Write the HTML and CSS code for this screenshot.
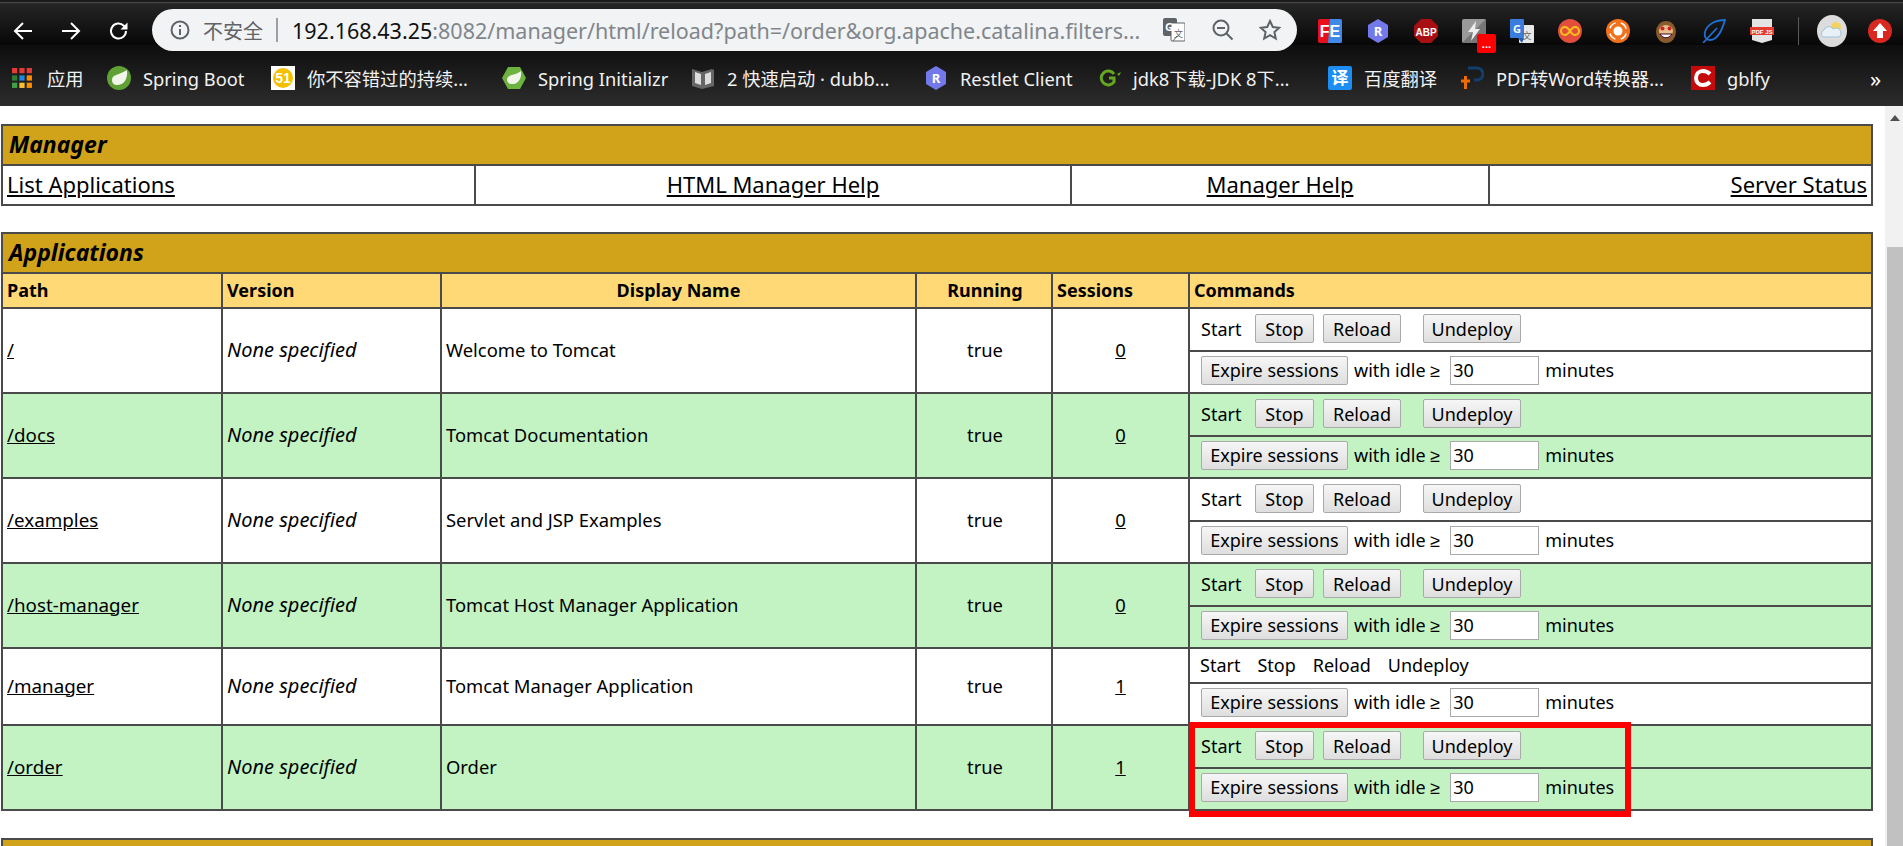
FILE: index.html
```html
<!DOCTYPE html>
<html lang="zh">
<head>
<meta charset="utf-8">
<title>/manager</title>
<link rel="stylesheet" href="styles.css">
</head>
<body>
<header class="chrome">
  <div class="toolbar">
    <nav class="nav">
      <svg class="nav-icon" viewBox="0 0 20 20"><path d="M19 10H2M10 2l-8 8 8 8"/></svg>
      <svg class="nav-icon" viewBox="0 0 20 20"><path d="M1 10h17M10 2l8 8-8 8"/></svg>
      <svg class="nav-icon" viewBox="0 0 20 20"><path d="M17 10a7.5 7.5 0 1 1-2.2-5.3L17 7"/><path class="fill" d="M18.500 1.500v7h-7z"/></svg>
    </nav>
    <div class="omnibox">
      <svg class="info" viewBox="0 0 20 20"><circle cx="10" cy="10" r="8.500"/><path d="M10 9v6M10 5v2"/></svg>
      <span class="insecure">不安全</span>
      <span class="divider"></span>
      <span class="url"><b>192.168.43.25</b>:8082/manager/html/reload?path=/order&amp;org.apache.catalina.filters...</span>
      <svg class="omni-icon translate" viewBox="0 0 22 24"><rect x="0" y="0" width="14" height="18" rx="2" fill="#5f6368"/><rect x="8" y="5" width="14" height="18" rx="1" fill="#fff" stroke="#5f6368"/><path d="M10 23l4-5" stroke="#5f6368"/><text x="2" y="13" class="svg-g">G</text><text x="11" y="19" class="svg-w">文</text></svg>
      <svg class="omni-icon line zoom" viewBox="0 0 22 22"><circle cx="9" cy="9" r="7.500"/><path d="M5 9h8M14.500 14.500l6 6"/></svg>
      <svg class="omni-icon line star" viewBox="0 0 22 22"><path d="M11 2l2.800 6 6.400.7-4.800 4.400 1.400 6.400L11 16.200 5.200 19.500l1.400-6.400L1.800 8.700 8.200 8z"/></svg>
    </div>
    <div class="extensions">
      <svg class="ext" viewBox="0 0 24 24"><rect width="24" height="24" rx="2" fill="#e8101c"/><path d="M12 0h10a2 2 0 0 1 2 2v20a2 2 0 0 1-2 2H10z" fill="#3f8ae8"/><text x="12" y="18" class="svg-fe">FE</text></svg>
      <svg class="ext" viewBox="0 0 24 24"><path d="M12 0l10 6v12l-10 6-10-6V6z" fill="#7379ea"/><text x="12" y="17" class="svg-r">R</text></svg>
      <svg class="ext" viewBox="0 0 24 24"><path d="M7 0h10l7 7v10l-7 7H7l-7-7V7z" fill="#a80f12"/><text x="12" y="16.500" class="svg-abp">ABP</text></svg>
      <span class="ext-slot">
        <svg class="ext" viewBox="0 0 24 24"><rect width="24" height="24" rx="2" fill="#9a9a9a"/><path d="M0 24L24 0v22a2 2 0 0 1-2 2z" fill="#777"/><path d="M14 2L6 13h5l-2 9 9-12h-5z" fill="#eee"/></svg>
        <span class="badge">...</span>
      </span>
      <svg class="ext" viewBox="0 0 24 24"><rect x="9" y="6" width="15" height="18" rx="1" fill="#e8e8e8"/><rect y="0" width="14" height="19" rx="1" fill="#3b7ddd"/><path d="M8 19l4 5 2-5z" fill="#2a5fb0"/><text x="7" y="14" class="svg-g2">G</text><text x="17" y="20" class="svg-w2">文</text></svg>
      <svg class="ext" viewBox="0 0 24 24"><circle cx="12" cy="12" r="12" fill="#e24d3c"/><path d="M12 12c-2-3-3.500-4-5-4a4 4 0 0 0 0 8c1.500 0 3-1 5-4s3.500-4 5-4a4 4 0 0 1 0 8c-1.500 0-3-1-5-4z" fill="none" stroke="#f7c21a" stroke-width="2"/></svg>
      <svg class="ext" viewBox="0 0 24 24"><circle cx="12" cy="12" r="12" fill="#f2711c"/><circle cx="12" cy="12" r="8.500" fill="none" stroke="#fff" stroke-width="1.500" stroke-dasharray="8 5.400" stroke-dashoffset="-2.500"/><circle cx="12" cy="12" r="4.500" fill="#fff"/></svg>
      <svg class="ext" viewBox="0 0 24 24"><ellipse cx="12" cy="13" rx="10" ry="11" fill="#8a5a2b"/><ellipse cx="12" cy="12" rx="7" ry="6" fill="#e8bd8b"/><circle cx="8.500" cy="9.500" r="2" fill="#c22"/><circle cx="15.500" cy="9.500" r="2" fill="#c22"/><path d="M6 15c3 5 9 5 12 0z" fill="#fff" stroke="#402"/></svg>
      <svg class="ext" viewBox="0 0 24 24"><path d="M23 1C14 1 5 5 3 13c-1 5 1 8 5 8 8 0 12-10 15-20zM1 24l14-15" fill="none" stroke="#1f6fd1" stroke-width="1.800"/></svg>
      <svg class="ext" viewBox="0 0 24 24"><path d="M2 0h20v21l-10 3-10-3z" fill="#e4e4e4"/><rect y="8" width="24" height="8" fill="#e63b2e"/><text x="12" y="14.500" class="svg-pdf">PDF JS</text></svg>
      <span class="ext-sep"></span>
      <svg class="weather" viewBox="0 0 30 32"><ellipse cx="15" cy="16" rx="15" ry="16" fill="#dcdcdc"/><circle cx="19" cy="12" r="5" fill="#f4d35e"/><path d="M6 22a4 4 0 0 1 1-7 5 5 0 0 1 9-1 5 5 0 0 1 6 8z" fill="#e8f1f8" stroke="#9fc3dd"/></svg>
      <svg class="ext last" viewBox="0 0 24 24"><circle cx="12" cy="12" r="12" fill="#d8281f"/><path d="M12 4l7 8h-4v7H9v-7H5z" fill="#fff"/></svg>
    </div>
  </div>
  <div class="bookmarks">
    <a class="bm"><svg class="bm-icon apps-icon" viewBox="0 0 20 20"><g fill="#e53935"><rect width="5" height="5"/><rect x="7" width="5" height="5"/><rect x="14" width="5" height="5" /></g><g><rect y="7" width="5" height="5" fill="#2e7d32"/><rect x="7" y="7" width="5" height="5" fill="#1e88e5"/><rect x="14" y="7" width="5" height="5" fill="#fb8c00"/><rect y="14" width="5" height="5" fill="#43a047"/><rect x="7" y="14" width="5" height="5" fill="#fbc02d"/><rect x="14" y="14" width="5" height="5" fill="#fb8c00"/></g></svg><span>应用</span></a>
    <a class="bm"><svg class="bm-icon" viewBox="0 0 24 24"><circle cx="12" cy="12" r="12" fill="#5fa134"/><path d="M20 4c1 9-3 15-10 15-3 0-5-2-5-5 0-6 8-5 15-10z" fill="#f1f5ea"/></svg><span>Spring Boot</span></a>
    <a class="bm"><svg class="bm-icon" viewBox="0 0 24 24"><rect width="24" height="24" fill="#fff"/><circle cx="12" cy="12" r="10" fill="#f6c000"/><text x="12" y="17" class="svg-51">51</text></svg><span>你不容错过的持续...</span></a>
    <a class="bm"><svg class="bm-icon" viewBox="0 0 24 24"><path d="M6 1h12l6 11-6 11H6L0 12z" fill="#6db33f"/><path d="M19 5c1 8-3 13-9 13-3 0-5-2-5-4 0-6 8-4 14-9z" fill="#f1f5ea"/></svg><span>Spring Initializr</span></a>
    <a class="bm"><svg class="bm-icon" viewBox="0 0 24 24"><path d="M1 3l10 3 10-3 2 1v16l-12 3L1 20z" fill="#666"/><path d="M4 6l6 2v11l-6-2zM14 8l6-2v11l-6 2z" fill="#ddd"/></svg><span>2 快速启动 · dubb...</span></a>
    <a class="bm"><svg class="bm-icon" viewBox="0 0 24 24"><path d="M12 0l10 6v12l-10 6-10-6V6z" fill="#7379ea"/><text x="12" y="17" class="svg-r">R</text></svg><span>Restlet Client</span></a>
    <a class="bm"><svg class="bm-icon" viewBox="0 0 24 24"><path d="M17 8a7 7 0 1 0 0 8v-4h-5" fill="none" stroke="#63a81e" stroke-width="3"/><path d="M20 8l4-2-2 4z" fill="#63a81e"/></svg><span>jdk8下载-JDK 8下...</span></a>
    <a class="bm"><svg class="bm-icon" viewBox="0 0 24 24"><rect width="24" height="24" rx="2" fill="#1c8df2"/><text x="12" y="18" class="svg-yi">译</text></svg><span>百度翻译</span></a>
    <a class="bm"><svg class="bm-icon" viewBox="0 0 24 24"><path d="M10 15H1M5.500 10v13" stroke="#ef6c00" stroke-width="3" fill="none"/><path d="M8 2h9a6 6 0 0 1 0 12h-3" stroke="#123f6d" stroke-width="3" fill="none"/></svg><span>PDF转Word转换器...</span></a>
    <a class="bm"><svg class="bm-icon" viewBox="0 0 24 24"><rect width="24" height="24" fill="#c40a0a"/><path d="M19 8c-2-2-4-3-7-3-4 0-7 3-7 7s3 7 7 7c3 0 5-1 7-3" fill="none" stroke="#fff" stroke-width="4"/></svg><span>gblfy</span></a>
    <span class="more">»</span>
  </div>
</header>

<div class="viewport">
  <main class="page">
    <table class="panel manager">
      <colgroup><col class="m1"><col class="m2"><col class="m3"><col class="m4"></colgroup>
      <tr class="title-row"><td colspan="4">Manager</td></tr>
      <tr class="links-row">
        <td><a>List Applications</a></td>
        <td class="center"><a>HTML Manager Help</a></td>
        <td class="center"><a>Manager Help</a></td>
        <td class="right"><a>Server Status</a></td>
      </tr>
    </table>

    <table class="panel apps">
      <colgroup><col class="a1"><col class="a2"><col class="a3"><col class="a4"><col class="a5"><col class="a6"></colgroup>
      <tr class="title-row"><td colspan="6">Applications</td></tr>
      <tr class="head-row">
        <th>Path</th><th>Version</th><th class="center">Display Name</th><th class="center">Running</th><th>Sessions</th><th>Commands</th>
      </tr>
      <tr class="app">
        <td class="path"><a>/</a></td><td class="ver">None specified</td><td>Welcome to Tomcat</td><td class="center">true</td><td class="center"><a>0</a></td>
        <td class="cmds"><div class="cmd-row"><span class="start">Start</span><button class="stop">Stop</button><button class="reload">Reload</button><button class="undeploy">Undeploy</button></div>
        <div class="cmd-row idle"><button>Expire sessions</button><span>with idle ≥</span><input value="30"><span>minutes</span></div></td>
      </tr>
      <tr class="app alt">
        <td class="path"><a>/docs</a></td><td class="ver">None specified</td><td>Tomcat Documentation</td><td class="center">true</td><td class="center"><a>0</a></td>
        <td class="cmds"><div class="cmd-row"><span class="start">Start</span><button class="stop">Stop</button><button class="reload">Reload</button><button class="undeploy">Undeploy</button></div>
        <div class="cmd-row idle"><button>Expire sessions</button><span>with idle ≥</span><input value="30"><span>minutes</span></div></td>
      </tr>
      <tr class="app">
        <td class="path"><a>/examples</a></td><td class="ver">None specified</td><td>Servlet and JSP Examples</td><td class="center">true</td><td class="center"><a>0</a></td>
        <td class="cmds"><div class="cmd-row"><span class="start">Start</span><button class="stop">Stop</button><button class="reload">Reload</button><button class="undeploy">Undeploy</button></div>
        <div class="cmd-row idle"><button>Expire sessions</button><span>with idle ≥</span><input value="30"><span>minutes</span></div></td>
      </tr>
      <tr class="app alt">
        <td class="path"><a>/host-manager</a></td><td class="ver">None specified</td><td>Tomcat Host Manager Application</td><td class="center">true</td><td class="center"><a>0</a></td>
        <td class="cmds"><div class="cmd-row"><span class="start">Start</span><button class="stop">Stop</button><button class="reload">Reload</button><button class="undeploy">Undeploy</button></div>
        <div class="cmd-row idle"><button>Expire sessions</button><span>with idle ≥</span><input value="30"><span>minutes</span></div></td>
      </tr>
      <tr class="app self">
        <td class="path"><a>/manager</a></td><td class="ver">None specified</td><td>Tomcat Manager Application</td><td class="center">true</td><td class="center"><a>1</a></td>
        <td class="cmds"><div class="cmd-row plain"><span>Start</span><span>Stop</span><span>Reload</span><span>Undeploy</span></div>
        <div class="cmd-row idle"><button>Expire sessions</button><span>with idle ≥</span><input value="30"><span>minutes</span></div></td>
      </tr>
      <tr class="app alt">
        <td class="path"><a>/order</a></td><td class="ver">None specified</td><td>Order</td><td class="center">true</td><td class="center"><a>1</a></td>
        <td class="cmds highlighted"><div class="cmd-row"><span class="start">Start</span><button class="stop">Stop</button><button class="reload">Reload</button><button class="undeploy">Undeploy</button></div>
        <div class="cmd-row idle"><button>Expire sessions</button><span>with idle ≥</span><input value="30"><span>minutes</span></div><span class="red-box"></span></td>
      </tr>
    </table>

    <table class="panel deploy">
      <tr class="title-row"><td></td></tr>
    </table>
  </main>
  <aside class="scrollbar">
    <span class="arrow"></span>
    <span class="thumb"></span>
  </aside>
</div>
</body>
</html>
```
FILE: styles.css
```css
* { box-sizing: border-box; }
html, body { margin: 0; height: 846px; overflow: hidden; background: #fff; }
body { font-family: "Noto Sans", "Liberation Sans", "Noto Sans CJK SC", sans-serif; color: #000; display: flex; flex-direction: column; }

/* browser chrome */
.chrome { flex: none; height: 106px; display: flex; flex-direction: column; color: #fff; }
.toolbar { position: relative; z-index: 2; height: 45px; display: flex; align-items: flex-start; background: linear-gradient(#2b2b2b, #242424 8%, #070707); border-top: 2px solid #1a1a1a; box-shadow: inset 0 1px 0 #4a4a4a; }
.nav { width: 152px; flex: none; display: flex; gap: 28px; padding: 19px 0 0 13px; }
.nav-icon { width: 20px; height: 20px; fill: none; stroke: #fff; stroke-width: 2; }
.nav-icon .fill { fill: #fff; stroke: none; }
.omnibox { flex: none; width: 1145px; height: 42px; margin-top: 7px; border-radius: 21px; background: #f1f3f4; display: flex; align-items: center; padding-left: 18px; font-size: 20px; color: #80868b; white-space: nowrap; }
.info { width: 20px; height: 20px; fill: none; stroke: #5f6368; stroke-width: 2; flex: none; }
.insecure { flex: none; margin-left: 13px; width: 63px; font-size: 20px; color: #5f6368; }
.divider { width: 2px; height: 24px; margin: 0 14px 0 10px; background: #9aa0a6; flex: none; }
.url { flex: none; width: 871px; font-size: 21.500px; overflow: hidden; font-family: "Noto Sans", sans-serif; }
.url b { font-weight: 400; color: #111; }
.omni-icon { flex: none; width: 22px; height: 24px; }
.translate { margin-right: 27px; }
.zoom { margin-right: 25px; }
.omni-icon.line { fill: none; stroke: #5f6368; stroke-width: 2; }
.svg-g { font: 700 11px "Noto Sans", sans-serif; fill: #fff; }
.svg-w { font: 9px "Noto Sans CJK SC", sans-serif; fill: #5f6368; }
.extensions { display: flex; align-items: flex-start; padding: 17px 0 0 21px; }
.ext { flex: none; width: 24px; height: 24px; margin-right: 24px; }
.ext-slot { position: relative; flex: none; width: 48px; height: 24px; }
.badge { position: absolute; left: 15px; top: 15px; width: 19px; height: 19px; border-radius: 2px; background: #f00; color: #fff; font: 700 11px/20px "Noto Sans", sans-serif; text-align: center; }
.ext-sep { flex: none; width: 1px; height: 28px; margin: -2px 18px 0 0; background: #5a5a5a; }
.weather { flex: none; width: 30px; height: 32px; margin: -4px 21px 0 0; }
.ext.last { margin-right: 0; }
.svg-fe { font: 800 16px "Liberation Sans", sans-serif; fill: #fff; text-anchor: middle; }
.svg-r { font: 700 13px "Noto Sans", sans-serif; fill: #fff; text-anchor: middle; }
.svg-abp { font: 700 10px "Liberation Sans", sans-serif; fill: #fff; text-anchor: middle; }
.svg-g2 { font: 700 11px "Noto Sans", sans-serif; fill: #fff; text-anchor: middle; }
.svg-w2 { font: 9px "Noto Sans CJK SC", sans-serif; fill: #666; text-anchor: middle; }
.svg-pdf { font: 700 6px "Liberation Sans", sans-serif; fill: #fff; text-anchor: middle; }
.svg-51 { font: 700 14px "Liberation Sans", sans-serif; fill: #fff; text-anchor: middle; }
.svg-yi { font: 700 17px "Noto Sans CJK SC", sans-serif; fill: #fff; text-anchor: middle; }

.bookmarks { height: 61px; padding: 5px 0 0 12px; background: linear-gradient(#0e0e0e, #2c2c2c); display: grid; grid-template-columns: 95px 164px 231px 189px 233px 173px 231px 132px 231px 179px 1fr; align-items: center; }
.bm { display: flex; align-items: center; gap: 12px; font-size: 18.300px; white-space: nowrap; color: #f1f1f1; }
.bm-icon { flex: none; width: 24px; height: 24px; }
.apps-icon { width: 21px; height: 21px; margin-right: 2px; }
.more { font-size: 22px; padding-left: 0; }

/* page */
.viewport { flex: 1; min-height: 0; display: flex; overflow: hidden; }
.page { flex: none; width: 1885px; padding: 18px 0 0 1px; overflow: hidden; }
.panel { width: 1872px; table-layout: fixed; border-collapse: collapse; border: 2px solid #4a4a4a; font-size: 18.400px; }
.panel td, .panel th { border: 2px solid #4a4a4a; padding: 0 4px 2px 4px; text-align: left; }
.panel a { color: #000; text-decoration: underline; }
.title-row td { background: #d0a31b; height: 40px; font-size: 23px; font-weight: 700; font-style: italic; padding-left: 6px; }
.center, .panel td.center, .panel th.center { text-align: center; }
.panel td.right { text-align: right; }

.manager { margin-bottom: 26px; }
.m1 { width: 473px; } .m2 { width: 596px; } .m3 { width: 418px; }
.links-row td { height: 40px; font-size: 22px; background: #fff; }

.a1 { width: 220px; } .a2 { width: 219px; } .a3 { width: 475px; } .a4 { width: 136px; } .a5 { width: 137px; }
.head-row th { background: #ffd975; height: 35px; font-size: 18px; font-weight: 700; }
.panel .head-row th:nth-child(4), .panel .app td:nth-child(4) { padding-left: 5px; padding-right: 3px; }
.app > td { height: 85px; background: #fff; }
.app.self > td { height: 75px; }
.app.alt > td { background: #c3f3c3; }
.panel td.ver { font-style: italic; font-size: 20px; }
.panel td.path { font-size: 18.800px; }
.panel td.cmds { position: relative; padding: 0; }

.cmd-row { height: 41px; display: flex; align-items: center; padding: 0 0 2px 11px; font-size: 18px; }
.cmd-row + .cmd-row { height: 42px; padding-bottom: 4px; border-top: 2px solid #4a4a4a; }
.self .cmd-row.plain { height: 33px; gap: 17px; padding: 0 0 2px 10px; }
.start { width: 54px; }
.cmd-row button { height: 29px; padding: 0; border: 1px solid #aaa; border-radius: 2px; background: linear-gradient(#f6f6f6, #dedede); font: 18px "Noto Sans", sans-serif; color: #000; }
.stop { width: 59px; margin-right: 9px; }
.reload { width: 78px; margin-right: 22px; }
.undeploy { width: 98px; }
.cmd-row.idle button { width: 147px; margin-right: 6px; }
.cmd-row.idle input { width: 89px; height: 29px; margin: 0 6px 0 10px; padding: 0 2px; border: 1px solid #aaa; background: #fff; font: 18px "Noto Sans", sans-serif; color: #000; }
.red-box { position: absolute; left: -1px; top: -4px; width: 442px; height: 95px; border: 6px solid #f00; pointer-events: none; }

.apps { margin-bottom: 27px; }
.deploy .title-row td { height: 40px; }

.scrollbar { flex: none; width: 18px; background: #f1f1f1; display: flex; flex-direction: column; padding-top: 9px; }
.arrow { align-self: center; width: 0; height: 0; border: 5px solid transparent; border-top: 0; border-bottom: 6px solid #505050; margin-left: 2px; }
.thumb { flex: 1; margin: 126px 0 0 2px; background: #c1c1c1; }
```
